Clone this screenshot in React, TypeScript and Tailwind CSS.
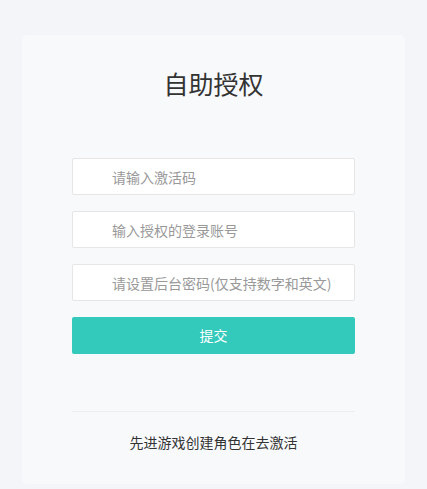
export default function App() {
  return (
    <div
      className="min-h-[489px] w-full bg-[#f4f5f9] pt-[35px] pb-[6px]"
      style={{ fontFamily: '"Noto Sans CJK SC", "Liberation Sans", sans-serif' }}
    >
      <div className="mx-[22px] rounded-[5px] bg-[#f8f9fb] px-[50px] pt-[29px] pb-[32px]">
        <h1 className="text-center text-[25px] leading-[38px] font-normal text-[#333]">自助授权</h1>

        <form className="mt-[56px] flex flex-col gap-[16px]" onSubmit={(e) => e.preventDefault()}>
          <input
            type="text"
            placeholder="请输入激活码"
            className="h-[37px] w-full rounded-[2px] border border-[#e6e6e6] bg-white pl-[39px] text-[14px] text-[#333] outline-none placeholder:text-[#999]"
          />
          <input
            type="text"
            placeholder="输入授权的登录账号"
            className="h-[37px] w-full rounded-[2px] border border-[#e6e6e6] bg-white pl-[39px] text-[14px] text-[#333] outline-none placeholder:text-[#999]"
          />
          <input
            type="text"
            placeholder="请设置后台密码(仅支持数字和英文)"
            className="h-[37px] w-full rounded-[2px] border border-[#e6e6e6] bg-white pl-[39px] text-[14px] text-[#333] outline-none placeholder:text-[#999]"
          />
          <button
            type="submit"
            className="h-[37px] w-full rounded-[2px] bg-[#33c9bb] text-[14px] text-white"
          >
            提交
          </button>
        </form>

        <div className="mt-[57px] border-t border-[#ebedf0] pt-[20px] text-center text-[14px] leading-[20px] text-[#333]">
          先进游戏创建角色在去激活
        </div>
      </div>
    </div>
  );
}
